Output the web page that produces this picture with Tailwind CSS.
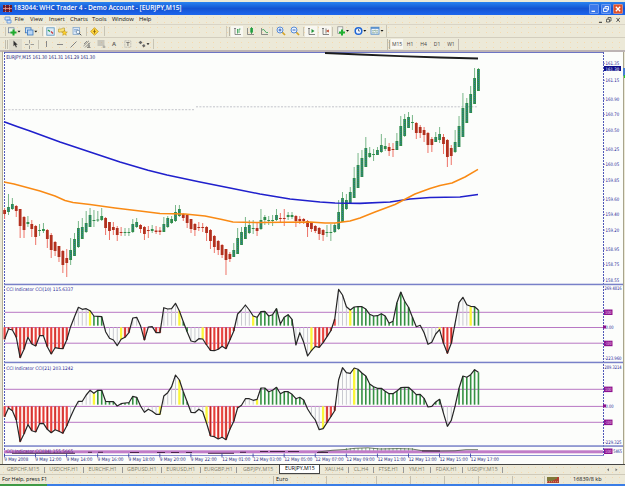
<!DOCTYPE html>
<html lang="en">
<head>
<meta charset="utf-8">
<title>WHC Trader 4</title>
<script src="https://cdn.jsdelivr.net/npm/@tailwindcss/browser@4"></script>
</head>
<body class="w-[625px] h-[486px] overflow-hidden bg-[#ece9d8] font-['Open_Sans','Liberation_Sans',sans-serif] text-[5.9px] leading-none text-[#111]">
<div class="flex h-[486px] w-[625px] flex-col bg-[radial-gradient(circle,#f6d9ae_0.5px,transparent_0.8px)] bg-size-[7px_5px]">

  <!-- title bar -->
  <header class="mt-[2px] flex h-[13px] shrink-0 items-center bg-linear-to-b from-[#2a83f0] via-[#1553d2] to-[#1c66ee] pl-[3px] pr-[2px] text-white">
    <svg class="h-[7px] w-[9px] shrink-0" viewBox="0 0 9 7"><rect width="9" height="7" fill="#7c1b25"/><path d="M0 3.5h9M2.5 0v7M6.5 0v7" stroke="#e0a0a0" stroke-width=".8"/><path d="M0 1.5h9M0 5.500h9" stroke="#402040" stroke-width=".6"/></svg>
    <span class="ml-[1.5px] whitespace-nowrap text-[6.6px] font-semibold tracking-[-0.04px]">183044: WHC Trader 4 - Demo Account - [EURJPY,M15]</span>
    <span class="grow"></span>
    <div class="flex gap-[2px]">
      <svg class="h-[10px] w-[10px]" viewBox="0 0 10 10"><rect x=".3" y=".3" width="9.4" height="9.4" rx="1.4" fill="#3b78ea" stroke="#a9c6f8" stroke-width=".6"/><path d="M2.5 7.3h3.5" stroke="#fff" stroke-width="1.3"/></svg>
      <svg class="h-[10px] w-[10px]" viewBox="0 0 10 10"><rect x=".3" y=".3" width="9.4" height="9.4" rx="1.4" fill="#3b78ea" stroke="#a9c6f8" stroke-width=".6"/><path d="M4 4V2.5h3.5V6H6.5M2.5 4.3h3.7V7.5H2.5z" stroke="#fff" stroke-width=".9" fill="none"/></svg>
      <svg class="h-[10px] w-[10px]" viewBox="0 0 10 10"><rect x=".3" y=".3" width="9.4" height="9.4" rx="1.4" fill="#e0512c" stroke="#f3c0ad" stroke-width=".6"/><path d="M2.8 2.8l4.4 4.4M7.2 2.8L2.8 7.2" stroke="#fff" stroke-width="1.3"/></svg>
    </div>
  </header>

  <!-- menu -->
  <nav class="flex h-[9px] shrink-0 items-center pl-[4px] pr-[4px]">
    <svg class="h-[8px] w-[8px]" viewBox="0 0 8 8"><path d="M1 1h5v3H1zM3 4h4v3H3z" fill="#d7e7fa" stroke="#5a8fd6" stroke-width=".8"/></svg>
    <span class="ml-[2.5px] w-[15.5px]">File</span><span class="w-[19px]">View</span><span class="w-[21px]">Insert</span><span class="w-[22px]">Charts</span><span class="w-[20px]">Tools</span><span class="w-[27px] tracking-[-0.1px]">Window</span><span class="tracking-[-0.1px]">Help</span>
    <span class="grow"></span>
    <svg class="h-[8px] w-[24px]" viewBox="0 0 24 8"><path d="M2 6.3h3" stroke="#333" stroke-width="1"/><path d="M11 3V1.5h3V5h-1M9.500 3.300h3V6h-3z" stroke="#444" stroke-width=".8" fill="none"/><path d="M19.500 2l3.200 3.800M22.700 2l-3.200 3.800" stroke="#444" stroke-width=".9"/></svg>
  </nav>

  <!-- main toolbar -->
  <div class="flex h-[14px] shrink-0 items-center border-y border-t-[#d9d4c6] border-b-[#d3cebe] pl-[5px]">
    <span class="h-[9px] w-[1px] bg-[#c8c4b4]"></span>
    <svg class="ml-[2px] h-[9px] w-[13px]" viewBox="0 0 13 9"><rect x="0.500" y=".8" width="5.500" height="5" fill="#eaf6ea" stroke="#679" stroke-width=".7"/><path d="M5.500 2.500v6M2.500 5.500h6" stroke="#1eaa2b" stroke-width="2"/><path d="M9.500 3.800h3l-1.500 1.700z" fill="#111"/></svg>
    <svg class="ml-[4px] h-[9px] w-[13px]" viewBox="0 0 13 9"><rect x=".5" y=".8" width="5.500" height="5" fill="#cfe3f8" stroke="#3a78c0" stroke-width=".8"/><rect x="2.500" y="3" width="5.500" height="5" fill="#b8d5f4" stroke="#3a78c0" stroke-width=".8"/><path d="M9.300 3.800h3l-1.500 1.700z" fill="#111"/></svg>
    <span class="ml-[4px] h-[9px] w-[1px] bg-[#c8c4b4]"></span>
    <span class="ml-[1px] flex h-[11px] w-[12px] items-center justify-center bg-[#f6f5ee]"><svg class="h-[9px] w-[9px]" viewBox="0 0 9 9"><rect x=".8" y=".8" width="7.400" height="7.400" fill="#dcecf8" stroke="#5793bb" stroke-width=".8"/><path d="M2 3l2 1.500" stroke="#1a9a40" stroke-width="1.200"/><path d="M5 4.500l2 2" stroke="#c33" stroke-width="1.200"/></svg></span>
    <svg class="ml-[2px] h-[9px] w-[10px]" viewBox="0 0 10 9"><path d="M.5 2h3l1-1h2v4h-6z" fill="#f8e27a" stroke="#b09030" stroke-width=".6"/><path d="M6.500 3l.8 1.900 2 .1-1.500 1.300.5 2-1.800-1.100-1.800 1.100.5-2L3.700 5l2-.1z" fill="#ffd42a" stroke="#b78a1b" stroke-width=".5"/></svg>
    <svg class="ml-[4px] h-[9px] w-[10px]" viewBox="0 0 10 9"><rect x="1" y=".5" width="6.500" height="7" fill="#dbe8f7" stroke="#7aa0c8" stroke-width=".7"/><path d="M2 2.500h4M2 4h3" stroke="#6c94c8" stroke-width=".6"/><circle cx="6" cy="5" r="1.800" fill="#f5faff" stroke="#56789a" stroke-width=".7"/><path d="M7.300 6.300l2 2" stroke="#555" stroke-width="1"/></svg>
    <span class="ml-[4px] h-[9px] w-[1px] bg-[#c8c4b4]"></span>
    <svg class="ml-[3px] h-[9px] w-[9px]" viewBox="0 0 9 9"><path d="M4.500.7l3.800 3.800-3.800 3.800L.7 4.500z" fill="#ffd83e" stroke="#c79516" stroke-width=".8"/><path d="M4.500 2.500v4M3.300 4.500h2.400" stroke="#8a6410" stroke-width=".9"/></svg>
    <span class="ml-[5px] h-[10px] w-[1px] bg-[#c8c4b4]"></span>
    <span class="ml-[121px] h-[11px] w-[1px] bg-[#d0cbbb]"></span><span class="ml-[2px] h-[9px] w-[1px] bg-[#b8b4a4]"></span>
    <span class="ml-[1px] flex h-[11px] w-[12px] items-center justify-center bg-[#f8f7f1]"><svg class="h-[9px] w-[9px]" viewBox="0 0 9 9"><path d="M2 1v6.500h6M1 2l1-1 1 1" stroke="#666" stroke-width=".7" fill="none"/><path d="M4 2.500h1M4.500 2.500v4M6 2h1.500M6 2v4" stroke="#2a9a4a" stroke-width=".8"/></svg></span>
    <svg class="ml-[3px] h-[9px] w-[9px]" viewBox="0 0 9 9"><path d="M1.500 1v6.500H8" stroke="#666" stroke-width=".7" fill="none"/><path d="M5.500 0v7" stroke="#187828" stroke-width=".7"/><rect x="4.300" y="1" width="2.600" height="4.600" fill="#20a040"/></svg>
    <svg class="ml-[5px] h-[9px] w-[9px]" viewBox="0 0 9 9"><path d="M1.500 1v6.500H8" stroke="#666" stroke-width=".7" fill="none"/><path d="M2 3q2-1.500 3 1t3 1.500" stroke="#2a9a4a" stroke-width=".8" fill="none"/></svg>
    <span class="ml-[3px] h-[9px] w-[1px] bg-[#d0cbbb]"></span>
    <svg class="ml-[3px] h-[10px] w-[10px]" viewBox="0 0 10 10"><path d="M6 6l3 3" stroke="#d4a428" stroke-width="1.700"/><circle cx="4" cy="4" r="3" fill="#e8f2ff" stroke="#4a80d0" stroke-width=".9"/><path d="M2.500 4h3M4 2.500v3" stroke="#2458b8" stroke-width=".9"/></svg>
    <svg class="ml-[4px] h-[10px] w-[10px]" viewBox="0 0 10 10"><path d="M6 6l3 3" stroke="#d4a428" stroke-width="1.700"/><circle cx="4" cy="4" r="3" fill="#e8f2ff" stroke="#4a80d0" stroke-width=".9"/><path d="M2.500 4h3" stroke="#2458b8" stroke-width=".9"/></svg>
    <span class="ml-[3px] h-[9px] w-[1px] bg-[#c8c4b4]"></span>
    <span class="ml-[1px] flex h-[11px] w-[12px] items-center justify-center bg-[#f8f7f1]"><svg class="h-[9px] w-[9px]" viewBox="0 0 9 9"><path d="M2 1v6.500h6M1 2l1-1 1 1" stroke="#555" stroke-width=".7" fill="none"/><path d="M4.500 2v4l3-2z" fill="#20963a"/></svg></span>
    <span class="ml-[2px] flex h-[11px] w-[12px] items-center justify-center bg-[#f8f7f1]"><svg class="h-[9px] w-[9px]" viewBox="0 0 9 9"><path d="M2 1v6.500h6M1 2l1-1 1 1M5 1.500v5" stroke="#555" stroke-width=".7" fill="none"/><path d="M5 4l2.800-1.600v3.200z" fill="#c0442a"/></svg></span>
    <span class="ml-[1px] h-[9px] w-[1px] bg-[#c8c4b4]"></span>
    <svg class="ml-[4px] h-[10px] w-[13px]" viewBox="0 0 13 10"><rect x=".8" y=".8" width="5" height="6.500" fill="#f2f6f2" stroke="#888" stroke-width=".7"/><path d="M5 3.500v6M2 6.500h6" stroke="#20b030" stroke-width="2"/><path d="M9 4h3l-1.500 1.700z" fill="#111"/></svg>
    <svg class="ml-[4px] h-[10px] w-[13px]" viewBox="0 0 13 10"><circle cx="4.500" cy="5" r="3.300" fill="#eef5ff" stroke="#1f66d6" stroke-width="1.500"/><path d="M4.500 3v2h1.500" stroke="#345" stroke-width=".7" fill="none"/><path d="M9.300 4h3l-1.500 1.700z" fill="#111"/></svg>
    <svg class="ml-[3px] h-[10px] w-[14px]" viewBox="0 0 14 10"><rect x="1" y="1.200" width="8" height="7" fill="#eef4fb" stroke="#4a86c8" stroke-width=".8"/><path d="M1 2h8" stroke="#4a86c8" stroke-width="1.500"/><path d="M2 4.800h2l1-.8 1.500.8H8M2 6.800h2.500l1-.8 1 .8H8" stroke="#5a8a60" stroke-width=".6" fill="none"/><path d="M10.500 4h3L12 5.700z" fill="#111"/></svg>
    <span class="ml-[2px] h-[12px] w-[1px] bg-[#c8c4b4]"></span>
  </div>

  <!-- drawing tools and periods -->
  <div class="flex h-[12px] shrink-0 items-center pl-[5px]">
    <span class="h-[9px] w-[1px] bg-[#c0bcac]"></span><span class="ml-[1px] h-[9px] w-[1px] bg-[#c0bcac]"></span>
    <span class="ml-[1px] flex h-[11px] w-[13px] items-center justify-center bg-[#dedbcd]"><svg class="h-[8px] w-[7px]" viewBox="0 0 7 8"><path d="M1.500.5v5.700l1.400-1.100 1 2.300 1-.5-1-2.100h1.800z" fill="#333"/></svg></span>
    <svg class="ml-[3px] h-[9px] w-[9px]" viewBox="0 0 9 9"><path d="M4.500 0v3.500M4.500 5.500V9M0 4.500h3.500M5.500 4.500H9" stroke="#888" stroke-width=".8"/></svg>
    <span class="ml-[4px] h-[9px] w-[1px] bg-[#c8c4b4]"></span>
    <span class="ml-[7px] h-[6px] w-[1px] bg-[#888]"></span>
    <span class="ml-[10px] h-[1px] w-[6px] bg-[#888]"></span>
    <svg class="ml-[7px] h-[7px] w-[7px]" viewBox="0 0 7 7"><path d="M.5 6.500l6-6" stroke="#777" stroke-width=".9"/></svg>
    <svg class="ml-[6px] h-[8px] w-[8px]" viewBox="0 0 8 8"><path d="M.5 6L6 .8M1 4L4 1M2 7.500l5-5M4 7.500h3.500M4.500 6h2.500M6 3v4" stroke="#666" stroke-width=".7" fill="none"/></svg>
    <svg class="ml-[6px] h-[8px] w-[9px]" viewBox="0 0 9 8"><path d="M.5 1h7M.5 3h7M.5 5h7M5.500 7h3M7 5.500v2.500" stroke="#888" stroke-width=".7"/></svg>
    <span class="ml-[6px] w-[8px] text-[6px] font-semibold text-[#555]">A</span>
    <svg class="ml-[4px] h-[8px] w-[8px]" viewBox="0 0 8 8"><rect x=".8" y=".8" width="6" height="6.400" fill="none" stroke="#999" stroke-width=".6" stroke-dasharray="1 .6"/><path d="M2.300 2.500h3.200M3.900 2.500V6" stroke="#666" stroke-width=".8"/></svg>
    <svg class="ml-[6px] h-[8px] w-[12px]" viewBox="0 0 12 8"><path d="M.5 2.500L2.500.7l2 1.800-2 1.800zM4 5.500l2-1.500 1.500 2L5.500 7.500z" fill="#666"/><path d="M8.500 3.200h3L10 5z" fill="#111"/></svg>
    <span class="ml-[3px] h-[10px] w-[1px] bg-[#c8c4b4]"></span>
    <span class="ml-[233px] h-[11px] w-[1px] bg-[#c0bcac]"></span><span class="ml-[1px] h-[9px] w-[1px] bg-[#b0ac9c]"></span>
    <div class="ml-[1px] flex items-center text-center text-[5px] text-[#444]"><span class="flex h-[10px] w-[12px] items-center justify-center bg-[#f8f7f1]">M15</span><span class="w-[14px]">H1</span><span class="w-[13px]">H4</span><span class="w-[14px]">D1</span><span class="w-[14px]">W1</span></div>
    <span class="h-[11px] w-[1px] bg-[#c0b8b0]"></span>
  </div>

  <!-- charts -->
  <svg id="chart" class="block h-[414px] w-[625px] shrink-0 font-['DejaVu_Sans_Condensed','DejaVu_Sans',sans-serif]" viewBox="0 50 625 414"></svg>

  <!-- chart tabs -->
  <div class="flex h-[10px] shrink-0 items-center border-t border-[#444] pr-[7px] text-[5.3px] text-[#85826f] whitespace-nowrap">
    <div id="tabs" class="flex h-full items-center"></div>
    <span class="grow"></span>
    <svg class="h-[6px] w-[12px]" viewBox="0 0 12 6"><path d="M3 1.300v3L1 2.800zM9.500 1.300v3l2-1.500z" fill="#777"/></svg>
  </div>

  <!-- status bar -->
  <footer class="flex h-[10px] shrink-0 items-center border-t border-[#cfcaba] pl-[2px] text-[5.5px]">
    <span class="w-[271px] tracking-[-0.05px]">For Help, press F1</span>
    <span class="flex h-[8px] w-[53px] items-center border-l border-[#c5c0b0] pl-[2px]">Euro</span>
    <span class="h-[8px] w-[50px] border-l border-[#c5c0b0]"></span><span class="h-[8px] w-[34px] border-l border-[#c5c0b0]"></span><span class="h-[8px] w-[34px] border-l border-[#c5c0b0]"></span><span class="h-[8px] w-[34px] border-l border-[#c5c0b0]"></span><span class="h-[8px] w-[34px] border-l border-[#c5c0b0]"></span><span class="h-[8px] w-[32px] border-l border-[#c5c0b0]"></span>
    <span class="flex h-[8px] w-[29px] items-center border-l border-[#c5c0b0] pl-[2px]"><svg class="h-[6px] w-[12px]" viewBox="0 0 12 6"><rect width="12" height="6" fill="#b04030"/><path d="M1 0v4M3 0v4M5 0v4M7 0v3M9 0v2" stroke="#60a040" stroke-width="1.200"/><path d="M0 4.700h12" stroke="#e8c8a0" stroke-width=".6" stroke-dasharray="1 1"/></svg></span>
    <span class="whitespace-nowrap">16839/8 kb</span>
  </footer>
  <div class="flex h-[2px] shrink-0 bg-[#3a7de6]"><span class="w-[47px] bg-[#3f9a45]"></span></div>
</div>

<script>
const svg = document.getElementById('chart');
const NS = 'http://www.w3.org/2000/svg';
function el(tag, attrs, text) {
  const e = document.createElementNS(NS, tag);
  for (const k in attrs) e.setAttribute(k, attrs[k]);
  if (text !== undefined) e.textContent = text;
  svg.appendChild(e);
  return e;
}
const rect = (x, y, w, h, fill) => el('rect', {x, y, width: w, height: h, fill});
const path = (pts, stroke, w, extra) => el('polyline', Object.assign({points: pts.map(p => p.join()).join(' '), fill: 'none', stroke, 'stroke-width': w, 'stroke-linejoin': 'round'}, extra || {}));
const label = (x, y, s, len, fill, size) => el('text', Object.assign({x, y, fill: fill || '#1c1c96', 'font-size': size || 4.8}, len ? {textLength: len, lengthAdjust: 'spacingAndGlyphs'} : {}), s);
const X = i => 4.6 + 3.884 * i;

// panes
rect(0, 50, 625, 2, '#bdb4b4');
rect(2, 51, 1, 413, '#b3ae94');
rect(3, 52, 620, 412, '#fcfdfb');
rect(623, 52, 1, 412, '#a8a48c');
rect(623, 68, 2, 8, '#4a7fd0'); rect(624, 75, 1, 3, '#20d020');
rect(4, 52, 600, 1, '#6c74c4');
for (const x of [4.5, 603.5]) el('line', {x1: x, y1: 52, x2: x, y2: 455, stroke: '#5058b8', 'stroke-width': 1, 'stroke-dasharray': '2 1'});
for (const y of [283.7, 361.7, 445.3]) { rect(4, y, 619, 1.5, '#7880c8'); }

// bid line
el('path', {d: 'M5 109.700H195M196 106.800H478', stroke: '#b4b6be', 'stroke-width': .8, 'stroke-dasharray': '2 1.4'});

// candles: body top, body bottom, high, low; sign of direction
const C = `r210 214 208 219|g207 212 194 215|g204 209 198 210|r206 211 205 217|r209 226 209 238|r217 230 216 238|g222 224 216 227|r224 229 220 237|r226 237 225 245|g230 231 224 236|g229 231 223 233|r230 239 229 248|r235 250 233 258|r242 251 241 256|r246 257 246 262|r251 265 250 273|r258 263 249 277|g250 260 238 265|g239 256 233 256|g228 247 221 248|g227 239 218 239|g223 232 211 233|g215 227 208 227|g220 221 210 227|g219.5 220.5 211 222|g216 220 208 221|r218 228 217 235|r222 231 222 240|r227 230 222 235|r228 235 226 241|r232 233 227 236|g232 233 228 236|g232 233 228 236|g224 232 219 233|g222 227 218 228|r225 229 224 233|r227 234 226 240|r230 231 226 238|g229 231 225 233|r230.5 232 226 234|r230.5 232 227 235|g224 232 217 232|g218 227 216 228|g219 223 216 224|g212 221 205 222|g209 216 205 217|r214 218 213 221|r215 223 215 228|r219 229 219 233|r224 230 223 236|r227 228 222 231|r227 228 223 232|r227 233 226 241|r230 241 229 249|r236 247 235 253|r241 250 240 255|r245 255 244 258|r249 260 249 275|r254 259 252 262|g250 257 243 257|g238 254 228 254|g232 245 227 245|g227 239 217 239|g225 233 220 234|g228 229 220 234|r228 231 223 236|g220 229 209 230|g217 220 215 225|g220 221 216 225|g220 221 215 226|g215 220 209 221|r218 219 213 222|r218 219 209 226|g215 217 212 220|g215 217 212 219|r216 221 215 227|r219 221 216 224|r219 221 218 224|r221 227 220 237|r223 229 222 232|r226 231 225 233|r228 234 227 240|r230 235 229 241|g232 233 225 237|g232 233 224 241|g225 232 223 233|g212 229 200 230|g198 222 192 222|g200 209 194 210|g192 203 187 203|g178 198 167 198|g165 188 153 188|g158 177 150 177|g148 167 137 167|g153 157 147 158|g154 155 149 161|g150 155 147 155|g145 152 134 153|g146 149 138 151|r147 151 143 156|r149 150 143 157|g141 150 133 150|g126 146 116 146|g119 136 114 137|g117 128 112 128|g122 123 115 130|r123 133 122 139|r127 133 125 138|r130 135 127 142|r133 145 132 153|r139 145 137 152|g137 142 132 142|g134 140 127 143|r137 144 134 154|r140 157 139 167|r148 156 145 165|g142 152 130 153|g126 147 116 147|g108 137 93 137|g103 123 98 123|g94 113 86 113|g78 104 68 104|g69 91 68 91`.split('|');
C.forEach((s, i) => {
  const up = s[0] === 'g', [a, b, h, l] = s.slice(1).split(' ').map(Number), x = X(i);
  rect(x - .5, h, 1, l - h, up ? '#79b789' : '#ee7468');
  rect(x - 1.4, a, 2.800, b - a, up ? '#2f8c4b' : '#b3301e');
  if (up && b - a > 4) el('line', {x1: x, x2: x, y1: a + 1, y2: b - 1, stroke: '#2a78a4', 'stroke-width': 1, 'stroke-dasharray': '1 1'});
});

// moving averages
path([[4,121.7],[17,126.500],[30,131],[60,142],[90,152],[120,162],[148,170.300],[167,175],[200,182],[230,188],[260,194],[290,199],[320,202],[335,203],[360,203.400],[390,202],[410,199],[430,197.500],[460,197],[478,194.500]], '#2020cc', 1.6);
path([[4,182],[14,184],[40,191],[55,196],[65,200.500],[73,202.500],[90,204.500],[115,208],[140,211],[160,213.500],[185,214],[205,216],[222,219.500],[233,222],[260,222.500],[310,222],[325,223],[335,223],[350,221],[360,218],[375,212],[395,204.500],[415,194],[430,188.500],[440,185.500],[452,183],[465,177],[478,169.300]], '#f98a14', 1.5);
path([[325,53],[360,54.500],[400,56.200],[440,57.500],[478,58.500]], '#1c1c1c', 1.8);

// CCI panes; values are in thirds of a pixel below y=280
const A = [178,147,150,172,233,208,172,192,198,167,167,200,222,203,205,206,180,140,110,82,88,86,92,108,109,110,155,175,180,197,178,172,158,114,112,137,180,141,140,158,158,83,87,86,70,93,125,155,183,186,176,177,195,211,212,208,199,206,180,153,102,90,75,90,108,112,95,94,108,104,86,132,112,104,118,195,158,187,228,212,199,202,188,170,152,118,28,45,80,90,81,80,80,87,103,108,107,101,108,130,124,68,36,64,82,112,140,136,158,193,187,162,149,190,220,190,130,68,52,74,79,80,90];
const B = [410,384,392,420,485,462,434,452,456,431,430,448,458,449,454,460,438,410,385,364,364,345,331,340,331,331,364,365,365,378,371,369,368,349,352,378,397,388,394,403,403,348,338,320,285,300,335,365,397,398,388,395,430,468,470,477,472,479,448,424,384,376,356,356,361,358,324,324,335,331,322,341,335,335,343,356,352,360,387,405,420,449,446,428,410,392,300,263,278,280,264,268,279,288,312,320,325,325,334,341,341,333,323,322,322,332,344,343,355,381,379,366,358,400,439,421,378,325,288,292,284,269,277];
// run-length bar colours
const runs = s => s.split(' ').flatMap(t => Array(+t.slice(1)).fill(t[0]));
const CA = runs('r17 w5 y1 g3 w4 y1 r2 w3 r1 w2 r2 w4 y1 g2 w3 y1 r8 w4 y1 g10 w4 y1 r6 w3 y1 g17 w5 y1 r3 w4 y1 g2');
const CB = runs('r17 w6 y1 g12 w4 y1 w4 y1 g2 w4 y1 r8 w4 y1 g12 w4 y1 r3 w4 y1 g22 w4 g6');
const COL = {w: '#c9cad0', y: '#fbf63a', g: '#359143', r: '#f25a55'};
function cci(vals, cols, zero) {
  vals.forEach((v, i) => {
    const c = cols[i], x = X(i), w = c === 'w' ? 1 : c === 'g' ? 1.6 : 2.300;
    if (v < zero - 6) rect(x - w / 2, 280 + v / 3, w, (zero - 5 - v) / 3, COL[c]);
    else if (v > zero + 2) {
      rect(x - w / 2, 280 + zero / 3, w, (v - zero) / 3, COL[c]);
      if (c === 'r') rect(x - .4, 280 + zero / 3, .9, (v - zero) / 3, i % 2 ? '#b8201c' : '#e03a34');
    }
  });
}
for (const y of [312.300, 327.500, 343.200, 389.300, 406.400, 422.300]) rect(5, y - .5, 598, 1, '#b878c4');
cci(A, CA, 142);
cci(B, CB, 379);
for (const v of [A, B]) path(v.map((y, i) => [X(i).toFixed(1), (280 + y / 3).toFixed(1)]), '#262626', 1.2);

// compressed third indicator
for (let i = 88; i < 106; i++) rect(X(i) - .5, 448, 1, 3, '#7fb583');
rect(4, 450.300, 599, 3, '#c07cc8');
path([[318,452],[332,450.300],[345,449.500],[355,448.300],[368,447.800],[380,449],[398,448.600],[412,449],[422,450.700],[440,451],[455,450.800],[466,449.700],[478,449.700]], '#4a5a44', .8);
el('path', {d: 'M12 453.300H75M88 452.300h4M98 452.300h5M130 452.500h9M157 452.500h8M171 452.500h8M186 452.500h6M208 453.300h26M240 452.300h6M260 451.500h8M270 451.500h15M288 451.500h11M317 452.500h11M422 451H440', stroke: '#3c183c', 'stroke-width': .9});

// captions
label(6.200, 58.600, 'EURJPY,M15  161.30 161.31 161.29 161.30', 89, '#26267a', 5);
label(6.200, 291.300, 'CCI Indicator  CCI(10) 115.6337', 67);
label(6.200, 369.500, 'CCI Indicator  CCI(21) 203.1242', 67);
label(6.200, 453.300, 'CCI Indicator  CCI(84) 155.5665', 67, '#5a2080');

// price scale
[['161.35',65],['161.15',82],['160.90',100.800],['160.70',116],['160.50',131.800],['160.25',150.800],['160.05',166],['159.85',181.800],['159.60',200.800],['159.40',216],['159.20',231.800],['158.95',250.800],['158.75',266],['158.55',281.600]].forEach(([s, y]) => {
  label(605.600, y, s, 13.500); rect(603, y - 2.100, 1.800, .8, '#5058b8');
});
rect(604, 66, 17, 5, '#10108a');
label(605.600, 70.500, '161.30', 13.500, '#fff', 4.600);
label(604.500, 290.300, '269.4816', 17);
label(604.500, 360.300, '-223.960', 17);
label(604.500, 368.600, '289.3214', 17);
label(604.500, 444, '-229.325', 17);
label(605.600, 329.200, '0.00', 8);
label(605.600, 408.200, '0.00', 8);
for (const [y, s] of [[309.500,'100'],[340.700,'-100'],[386.600,'100'],[419.600,'-100'],[448.500,'100']]) {
  rect(604, y, 8.500, 5.500, '#8c1490'); label(605, y + 4.400, s, 6.500, '#f4d8f4', 4.500);
}
label(613.200, 453.200, '5465', 8.800);
for (const y of [327, 405.900]) rect(603, y - 1.500, 3, 3, '#8c1490');

// time axis
rect(4, 455, 600, .8, '#6c74c4');
['9 May 2008','9 May 12:00','9 May 14:00','9 May 16:00','9 May 18:00','9 May 20:00','9 May 22:00','12 May 01:00','12 May 03:00','12 May 05:00','12 May 07:00','12 May 09:00','12 May 11:00','12 May 13:00','12 May 15:00','12 May 17:00'].forEach((s, k) => {
  const x = 4.500 + 31.070 * k;
  rect(x - .4, 453.500, .8, 4, '#3038a0');
  label(x + (k > 6 ? .3 : -.2), 461, s, k === 0 ? 24 : k > 6 ? 28 : 26, '#26267a', 4.900);
});

// tab strip: text and slot width
document.getElementById('tabs').innerHTML = [['GBPCHF,M15',43],['USDCHF,H1',38.5],['EURCHF,H1',39.300],['GBPUSD,H1',39],['EURUSD,H1',39],['EURGBP,H1',36],['GBPJPY,M15',42.700],['EURJPY,M15',41],['XAU,H4',28.500],['CL,H4',25],['FTSE,H1',30],['YM,H1',27],['FDAX,H1',32],['USDJPY,M15',40]].map(([s, w], i) =>
  `<span class="${i === 7 ? 'flex h-full items-center justify-center border-x border-b border-[#444] bg-white text-black' : i === 6 ? 'flex h-[6px] items-center justify-center' : 'flex h-[6px] items-center justify-center border-r border-[#999]'}" style="width:${w}px;${i ? '' : 'margin-left:2px'}">${s}</span>`).join('');
</script>
</body>
</html>
